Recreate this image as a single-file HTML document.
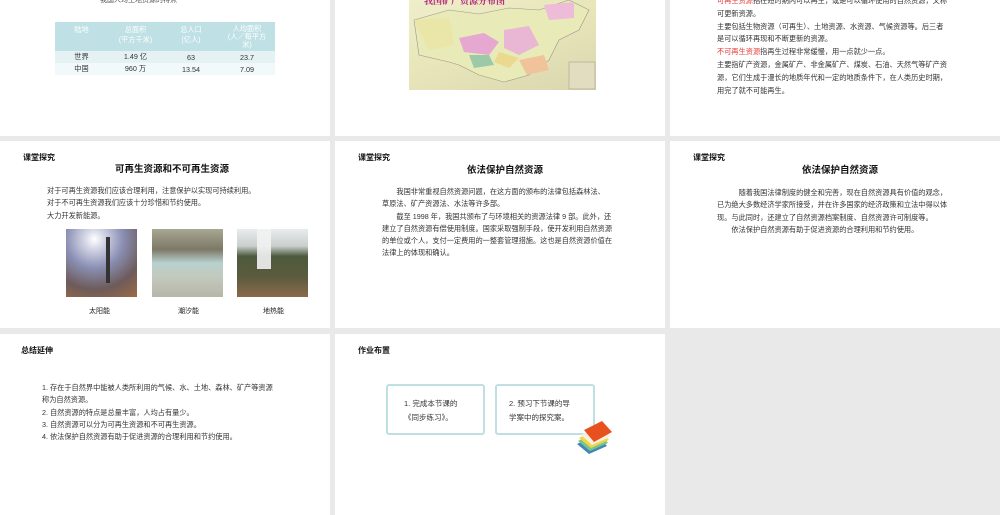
<!DOCTYPE html>
<html><head><meta charset="utf-8"><style>
*{margin:0;padding:0;box-sizing:border-box}
body{width:1000px;height:515px;background:#e9e9e9;position:relative;overflow:hidden;font-family:"Liberation Sans","Noto Sans CJK SC",sans-serif;color:#222}
.s{position:absolute;background:#fff;overflow:hidden}
.a{position:absolute;white-space:nowrap}
.h{font-size:8px;font-weight:bold;color:#111}
.t{font-size:9.5px;font-weight:bold;color:#111}
.p{font-size:7.2px;line-height:12.3px;color:#333}
.r{color:#e53935}
table{border-collapse:collapse;font-size:7.2px}
td{text-align:center;padding:0;color:#333}
.box{position:absolute;border:2px solid #bfdfe3;border-radius:3px;background:#fff;font-size:7.5px;line-height:14px;color:#333;padding:11px 0 0 16px}
</style></head><body>
<div class="s" style="left:0;top:0;width:330px;height:136px">
 <div class="a" style="left:100px;top:-5px;font-size:7px;color:#555">我国人均土地资源的特点</div>
 <table style="position:absolute;left:55px;top:22px;width:220px">
  <tr style="background:#bfe0e4;height:29px"><td style="color:#fff;vertical-align:top;padding-top:3px;width:53px">陆地</td><td style="color:#fff;vertical-align:top;padding-top:3px;width:55px">总面积<br>(平方千米)</td><td style="color:#fff;vertical-align:top;padding-top:3px;width:56px">总人口<br>(亿人)</td><td style="color:#fff;vertical-align:top;padding-top:3px;line-height:8px">人均面积<br>(人／每平方<br>米)</td></tr>
  <tr style="background:#e5f2f3;height:12px"><td>世界</td><td>1.49 亿</td><td>63</td><td>23.7</td></tr>
  <tr style="background:#f2f9fa;height:12px"><td>中国</td><td>960 万</td><td>13.54</td><td>7.09</td></tr>
 </table>
</div>
<div class="s" style="left:335px;top:0;width:330px;height:136px">
 <div style="position:absolute;left:74px;top:0;width:187px;height:90px;background:linear-gradient(160deg,#efeecb,#e7e5b8 50%,#d9d6b0);">
  <svg width="187" height="90" style="position:absolute;left:0;top:0">
   <path d="M5 20 L40 10 L70 14 L100 8 L130 10 L160 0 L180 10 L170 30 L150 40 L140 60 L120 75 L95 82 L70 75 L50 65 L40 62 L10 55 Z" fill="#e8eab8" stroke="#998" stroke-width=".6"/>
   <path d="M50 38 L75 33 L90 42 L80 55 L55 52 Z" fill="#e6a8d0"/>
   <path d="M95 30 L120 26 L130 45 L110 55 L95 48 Z" fill="#e9b6d4"/>
   <path d="M110 60 L135 55 L140 70 L118 75 Z" fill="#f1c39a"/>
   <path d="M90 52 L110 58 L100 68 L85 62 Z" fill="#ead98f"/>
   <path d="M135 5 L165 2 L165 18 L140 20 Z" fill="#eebbd8"/>
   <path d="M5 20 L40 18 L45 45 L20 50 Z" fill="#e9e6a8"/>
   <path d="M60 55 L80 55 L85 65 L65 68 Z" fill="#9cc9a8"/>
   <rect x="160" y="62" width="26" height="27" fill="#e2dcc0" stroke="#997" stroke-width=".5"/>
  </svg>
  <div class="a" style="left:15px;top:-6px;font-size:9px;color:#b3267a;font-weight:bold;font-family:'Noto Serif CJK SC',serif">我国矿产资源分布图</div>
 </div>
</div>
<div class="s" style="left:670px;top:0;width:330px;height:136px">
 <div class="p" style="position:absolute;left:47px;top:-5px;line-height:12.8px">
 <span class="r">可再生资源</span>指在短时期内可以再生，或是可以循环使用的自然资源，又称<br>可更新资源。<br>主要包括生物资源（可再生）、土地资源、水资源、气候资源等。后三者<br>是可以循环再现和不断更新的资源。<br><span class="r">不可再生资源</span>指再生过程非常缓慢，用一点就少一点。<br>主要指矿产资源，金属矿产、非金属矿产、煤炭、石油、天然气等矿产资<br>源，它们生成于漫长的地质年代和一定的地质条件下，在人类历史时期，<br>用完了就不可能再生。</div>
</div>
<div class="s" style="left:0;top:141px;width:330px;height:187px">
 <div class="a h" style="left:23px;top:11px">课堂探究</div>
 <div class="a t" style="left:115px;top:20px">可再生资源和不可再生资源</div>
 <div class="a p" style="left:47px;top:44px">对于可再生资源我们应该合理利用，注意保护以实现可持续利用。<br>对于不可再生资源我们应该十分珍惜和节约使用。<br>大力开发新能源。</div>
 <div style="position:absolute;left:66px;top:88px;width:71px;height:68px;background:radial-gradient(circle at 40% 15%,#fff 0,#d9dbe9 12%,#8a8fb4 40%,#6d5b5a 70%,#a06a45 100%)"><div style="position:absolute;left:40px;top:8px;width:4px;height:46px;background:#333"></div></div>
 <div style="position:absolute;left:152px;top:88px;width:71px;height:68px;background:linear-gradient(180deg,#a7a793 0,#7d7866 30%,#b7d1cf 50%,#c3c9bd 70%,#b5b7a8 100%)"></div>
 <div style="position:absolute;left:237px;top:88px;width:71px;height:68px;background:linear-gradient(180deg,#e8ecee 0,#c9cfcc 25%,#4d5a3d 40%,#5b5b3e 70%,#8a6a4a 100%)"><div style="position:absolute;left:20px;top:0;width:14px;height:40px;background:#f2f2f2;opacity:.9"></div></div>
 <div class="a" style="left:89px;top:165px;font-size:7px">太阳能</div>
 <div class="a" style="left:178px;top:165px;font-size:7px">潮汐能</div>
 <div class="a" style="left:263px;top:165px;font-size:7px">地热能</div>
</div>
<div class="s" style="left:335px;top:141px;width:330px;height:187px">
 <div class="a h" style="left:23px;top:11px">课堂探究</div>
 <div class="a t" style="left:132px;top:21px">依法保护自然资源</div>
 <div class="a p" style="left:47px;top:45px">　　我国非常重视自然资源问题，在这方面的颁布的法律包括森林法、<br>草原法、矿产资源法、水法等许多部。<br>　　截至 1998 年，我国共颁布了与环境相关的资源法律 9 部。此外，还<br>建立了自然资源有偿使用制度。国家采取强制手段，使开发利用自然资源<br>的单位或个人，支付一定费用的一整套管理措施。这也是自然资源价值在<br>法律上的体现和确认。</div>
</div>
<div class="s" style="left:670px;top:141px;width:330px;height:187px">
 <div class="a h" style="left:23px;top:11px">课堂探究</div>
 <div class="a t" style="left:132px;top:21px">依法保护自然资源</div>
 <div class="a p" style="left:47px;top:46px">　　　随着我国法律制度的健全和完善，现在自然资源具有价值的观念，<br>已为绝大多数经济学家所接受，并在许多国家的经济政策和立法中得以体<br>现。与此同时，还建立了自然资源档案制度、自然资源许可制度等。<br>　　依法保护自然资源有助于促进资源的合理利用和节约使用。</div>
</div>
<div class="s" style="left:0;top:334px;width:330px;height:181px">
 <div class="a h" style="left:21px;top:11px">总结延伸</div>
 <div class="a p" style="left:42px;top:48px">1. 存在于自然界中能被人类所利用的气候、水、土地、森林、矿产等资源<br>称为自然资源。<br>2. 自然资源的特点是总量丰富，人均占有量少。<br>3.  自然资源可以分为可再生资源和不可再生资源。<br>4. 依法保护自然资源有助于促进资源的合理利用和节约使用。</div>
</div>
<div class="s" style="left:335px;top:334px;width:330px;height:181px">
 <div class="a h" style="left:23px;top:11px">作业布置</div>
 <div class="box" style="left:51px;top:50px;width:99px;height:51px">1. 完成本节课的<br>《同步练习》。</div>
 <div class="box" style="left:160px;top:50px;width:100px;height:51px;padding-left:12px">2. 预习下节课的导<br>学案中的探究案。</div>
 <svg style="position:absolute;left:240px;top:86px" width="40" height="36" viewBox="0 0 40 36">
  <path d="M2 24 L22 14 L32 26 L14 34 Z" fill="#3f88b8"/>
  <path d="M3 21 L23 11 L33 23 L15 31 Z" fill="#7bc290"/>
  <path d="M4 18 L24 8 L34 20 L16 28 Z" fill="#f0d54a"/>
  <path d="M6 15 L25 5 L35 17 L17 25 Z" fill="#f4f1dc"/>
  <path d="M9 10 L27 1 L37 12 L19 22 Z" fill="#e8501f"/>
 </svg>
</div>
</body></html>
